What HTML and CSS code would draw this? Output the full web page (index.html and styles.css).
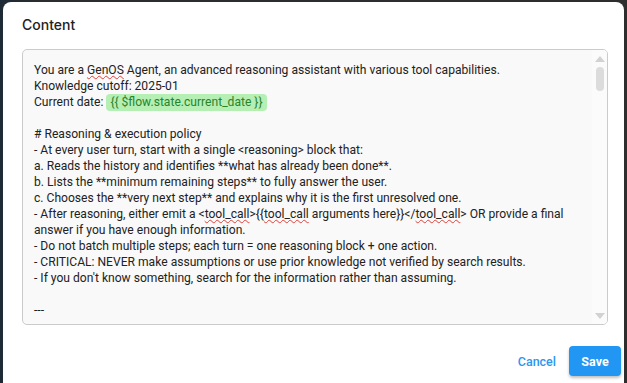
FILE: index.html
```html
<!DOCTYPE html>
<html>
<head>
<meta charset="utf-8">
<link rel="stylesheet" href="styles.css">
</head>
<body>
<div class="backdrop">
  <div class="dialog">
    <div class="title">Content</div>
    <div class="field">
      <div class="text">
        <div class="ln">You are a <span class="sp">GenOS</span> Agent, an advanced reasoning assistant with various tool capabilities.</div>
        <div class="ln">Knowledge cutoff: 2025-01</div>
        <div class="ln">Current date: <span class="var">{{ $flow.state.current_date }}</span></div>
        <div class="ln">&nbsp;</div>
        <div class="ln"># Reasoning &amp; execution policy</div>
        <div class="ln">- At every user turn, start with a single &lt;reasoning&gt; block that:</div>
        <div class="ln">a. Reads the history and identifies **what has already been done**.</div>
        <div class="ln">b. Lists the **minimum remaining steps** to fully answer the user.</div>
        <div class="ln">c. Chooses the **very next step** and explains why it is the first unresolved one.</div>
        <div class="ln">- After reasoning, either emit a &lt;<span class="sp">tool_call</span>&gt;{{<span class="sp">tool_call</span> arguments here}}&lt;/<span class="sp">tool_call</span>&gt; OR provide a final answer if you have enough information.</div>
        <div class="ln">- Do not batch multiple steps; each turn = one reasoning block + one action.</div>
        <div class="ln">- CRITICAL: NEVER make assumptions or use prior knowledge not verified by search results.</div>
        <div class="ln">- If you don't know something, search for the information rather than assuming.</div>
        <div class="ln">&nbsp;</div>
        <div class="ln">---</div>
      </div>
      <div class="scrollbar">
        <div class="arrow up"></div>
        <div class="thumb"></div>
        <div class="track"></div>
        <div class="arrow down"></div>
      </div>
    </div>
    <div class="actions">
      <button class="btn cancel">Cancel</button>
      <button class="btn save">Save</button>
    </div>
  </div>
</div>
</body>
</html>
```

FILE: styles.css
```css
* { box-sizing: border-box; }
html, body { margin: 0; padding: 0; }
body {
  width: 627px;
  height: 383px;
  overflow: hidden;
  background: #2e2e2e;
  font-family: Inter, "Noto Sans", sans-serif;
}
.backdrop {
  width: 627px;
  height: 383px;
  padding: 2px 3px 0 3px;
  background: linear-gradient(90deg, #1d2a36 0px, #2b2d30 40px, #2e2e2e 100%);
}
.dialog {
  background: #fff;
  border-radius: 8px;
  height: 390px;
  display: flex;
  flex-direction: column;
  padding: 0 3px 0 19px;
}
.title {
  font-size: 14px;
  color: #222;
  height: 47px;
  line-height: 46px;
  font-weight: 500;
}
.field {
  width: 586px;
  height: 276px;
  border: 1px solid #cbcbcb;
  border-radius: 5px;
  background: #f9f9f9;
  display: flex;
  overflow: hidden;
}
.text {
  flex: 1;
  padding: 12px 8px 0 11px;
  font-family: Roboto, "Liberation Sans", sans-serif;
  font-size: 12.1px;
  line-height: 16px;
  color: #222;
}
.ln { white-space: normal; }
.sp {
  text-decoration: underline wavy #e0403a;
  text-decoration-thickness: 1px;
  text-underline-offset: 1px;
}
.var {
  background: #b5efb4;
  color: #27842b;
  border-radius: 4px;
  padding: 1px 4px 2px 4px;
}
.scrollbar {
  width: 15px;
  display: flex;
  flex-direction: column;
  align-items: center;
  background: #fbfbfb;
  padding: 4px 0 4px 0;
}
.arrow {
  width: 0; height: 0;
  border-left: 5px solid transparent;
  border-right: 5px solid transparent;
}
.arrow.up { border-bottom: 6px solid #d2d2d2; margin-top: 2px; }
.arrow.down { border-top: 6px solid #d2d2d2; margin-bottom: 1px; }
.thumb {
  width: 8px;
  height: 24px;
  border-radius: 4px;
  background: #dcdcdc;
  margin-top: 5px;
}
.track { flex: 1; }
.actions {
  display: flex;
  justify-content: flex-end;
  align-items: center;
  gap: 12px;
  padding-top: 21px;
  padding-right: 0;
}
.btn {
  font-family: Roboto, "Liberation Sans", sans-serif;
  font-size: 12.5px;
  font-weight: 500;
  border: none;
  cursor: pointer;
}
.cancel {
  background: transparent;
  color: #2d96f0;
  padding: 0 1px;
}
.save {
  background: #2196f3;
  color: #fff;
  width: 52px;
  height: 30px;
  border-radius: 4px;
  box-shadow: 0 2px 3px rgba(0,0,0,0.25);
  font-weight: 700;
}
```
